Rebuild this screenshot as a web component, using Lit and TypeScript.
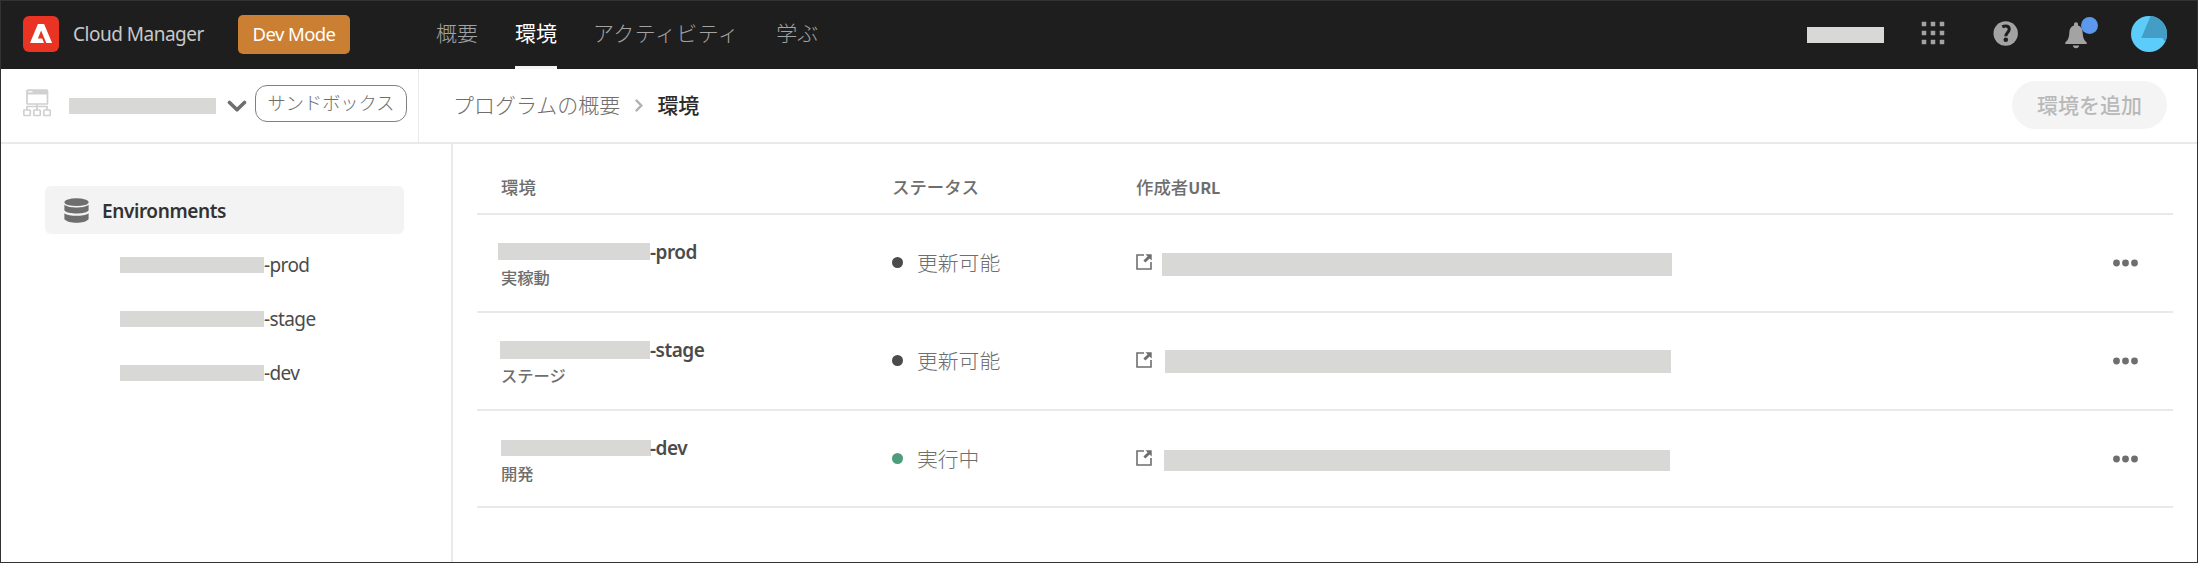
import { LitElement, html, css } from "lit";
import { customElement } from "lit/decorators.js";
import { classMap } from "lit/directives/class-map.js";

const rows = [
  { cls: "r1", suffix: "-prod", type: "実稼動", status: "更新可能", running: false },
  { cls: "r2", suffix: "-stage", type: "ステージ", status: "更新可能", running: false },
  { cls: "r3", suffix: "-dev", type: "開発", status: "実行中", running: true },
];

const logo = html`<svg class="logo" viewBox="0 0 36 36" width="36" height="36"><rect width="36" height="36" rx="6" fill="#e93323"/><path fill="#fff" d="M14.900 8h6.200l8 19h-5.800l-5.200-12.600-3.200 8.200h4.300l1.800 4.400H7z"/></svg>`;
const chevron = html`<svg class="chev" viewBox="0 0 20 13" width="20" height="13"><path d="M2.500 2.500 10 9.800 17.500 2.500" fill="none" stroke="#6e6e6e" stroke-width="3.600" stroke-linecap="round" stroke-linejoin="round"/></svg>`;
const program = html`<svg class="program" viewBox="0 0 28 28" width="28" height="28"><g fill="none" stroke="#d0d0d0" stroke-width="1.700"><rect x="4" y="1" width="20.500" height="14" rx="1"/><path d="M14 15v6M4 21v-3.500h20V21"/><rect x=".8" y="21" width="6.500" height="5.500" rx=".8"/><rect x="10.800" y="21" width="6.500" height="5.500" rx=".8"/><rect x="20.800" y="21" width="6.500" height="5.500" rx=".8"/></g><path d="M4 1h20.500v4.500H4z" fill="#d0d0d0"/><path d="M5 2.800h4.500" stroke="#fff" stroke-width="1.200"/></svg>`;
const grid = html`<svg class="grid" viewBox="0 0 24 24" width="24" height="24" fill="#a3a3a3">${[0.5, 9.500, 18.500].map((y) => [0.5, 9.500, 18.500].map((x) => html`<svg x=${x} y=${y} width="5" height="5"><rect width="5" height="5" rx=".8"/></svg>`))}</svg>`;
const help = html`<svg class="help" viewBox="0 0 26 26" width="26" height="26"><circle cx="12.700" cy="12.500" r="12.200" fill="#a3a3a3"/><path d="M9.300 5.900C13 4 16.600 5.200 16.200 8.700c-.3 2.600-3.300 3.300-3.400 6.600" fill="none" stroke="#1e1e1e" stroke-width="3"/><circle cx="12.800" cy="18.800" r="2.300" fill="#1e1e1e"/></svg>`;
const bell = html`<svg viewBox="0 0 22 27" width="22" height="27" fill="#a3a3a3"><path d="M11 .3c1.200 0 2 .8 2 2v1.200c3.500 1 4.500 4 4.700 7.500.3 5 1.300 7 4 9.500v1.500H.3v-1.500c2.700-2.500 3.700-4.500 4-9.500.2-3.500 1.200-6.500 4.700-7.500V2.300c0-1.200.8-2 2-2zM7.800 23.500h6.400c-.4 1.700-1.500 2.700-3.200 2.700s-2.800-1-3.200-2.700z"/></svg>`;
const avatar = html`<svg class="avatar" viewBox="0 0 36 36" width="36" height="36"><circle cx="18" cy="18" r="18" fill="#5ccdfb"/><path d="M19.500.1A18 18 0 0 1 34.200 26L31.500 22H10.300z" fill="#449dc5"/></svg>`;
const crumb = html`<svg class="sep" viewBox="0 0 8 13" width="8" height="13"><path d="M1.500 1.500 6.300 6.500 1.500 11.500" fill="none" stroke="#b0b0b0" stroke-width="2.400" stroke-linecap="round"/></svg>`;
const database = html`<svg viewBox="0 0 25 25" width="25" height="25" fill="#6e6e6e"><ellipse cx="12.500" cy="4.200" rx="12.100" ry="3.900"/><path d="M.4 6.800C3 9 8 9.500 12.500 9.500S22 9 24.600 6.800v5.700C22.500 14.700 17.500 15.500 12.500 15.500S2.500 14.700.4 12.500zM.4 15.200c2.600 2.200 7.600 2.500 12.100 2.500s9.500-.3 12.100-2.500v6C22.500 23.700 17.500 24.700 12.500 24.700S2.500 23.700.4 21.200z"/></svg>`;
const external = html`<svg class="ext" viewBox="0 0 16 16" width="16" height="16"><path d="M8 1H1v14h14V8" fill="none" stroke="#6e6e6e" stroke-width="1.600"/><path d="M9.500.3h6.200v6.200l-2.100-2.100-4.200 4.200-2-2 4.200-4.200z" fill="#6e6e6e"/></svg>`;
const more = html`<svg class="more" viewBox="0 0 26 8" width="26" height="8" fill="#6e6e6e"><circle cx="3.500" cy="4" r="3.400"/><circle cx="12.500" cy="4" r="3.400"/><circle cx="21.500" cy="4" r="3.400"/></svg>`;

@customElement("app-root")
export class AppRoot extends LitElement {
  static styles = css`
    :host { display: block; }
    * { box-sizing: border-box; }
    svg { display: block; flex: none; }
    .page { height: 563px; border: 1px solid #323232; background: #fff; display: flex; flex-direction: column; overflow: hidden; font-family: "Noto Sans", "Noto Sans CJK JP", sans-serif; font-size: 19px; color: #6e6e6e; white-space: nowrap; }
    .jp { font-family: "Noto Sans CJK JP", sans-serif; }
    .redact { background: #d8d8d6; flex: none; }
    header { height: 68px; flex: none; background: #1e1e1e; display: flex; align-items: center; padding: 0 30px 3px 22px; }
    .brand { margin-left: 14px; width: 130px; color: #c8c8c8; font-size: 19px; letter-spacing: -.5px; }
    .mode { margin-left: 35px; width: 112px; height: 39px; border-radius: 5px; background: #cb7f33; color: #fff; display: flex; align-items: center; justify-content: center; font-size: 18.500px; letter-spacing: -.6px; margin-top: 1px; padding-bottom: 2px; }
    nav { display: flex; align-self: stretch; margin: 0 0 -3px 86px; gap: 37px; font-size: 21px; font-weight: 300; color: #a3a3a3; }
    nav span { display: flex; align-items: center; padding-bottom: 5px; border-bottom: 3px solid transparent; padding-top: 2px; }
    nav .on { color: #fff; border-color: #f4f4f4; font-weight: 400; }
    nav .wide { letter-spacing: .4px; margin-left: -1px; }
    .user { width: 77px; height: 16px; margin-left: auto; margin-top: 2px; }
    .grid { margin-left: 37px; margin-top: -1px; }
    .help { margin-left: 48px; margin-top: 1px; }
    .bell { position: relative; margin: 3px 0 0 46px; }
    .badge { position: absolute; left: 16px; top: -5px; width: 17px; height: 17px; border-radius: 50%; background: #5c98ee; }
    .avatar { margin-left: 44px; }
    .sub { height: 75px; flex: none; border-bottom: 2px solid #e9e9e9; display: flex; }
    .picker { width: 418px; border-right: 1px solid #e9e9e9; display: flex; align-items: center; padding: 0 11px 3px 22px; }
    .program { margin-top: -3px; }
    .prog-name { width: 147px; height: 16px; margin: 3px 11px 0 18px; }
    .chev { margin-top: 4px; }
    .pill { margin-left: 8px; width: 152px; height: 37px; border: 1px solid #808080; border-radius: 12px; font-size: 18.200px; font-weight: 300; display: flex; align-items: center; justify-content: center; padding-bottom: 3px; margin-top: -1px; }
    .crumbs { display: flex; align-items: center; padding: 0 0 4px 34px; font-size: 21px; font-weight: 300; }
    .sep { margin: 4px 14px 0 15px; }
    .crumbs .here { font-weight: 500; color: #2c2c2c; }
    .add { margin: 12px 30px 0 auto; width: 155px; height: 48px; border-radius: 24px; background: #f4f4f4; color: #b9b9b9; font-size: 21px; font-weight: 500; display: flex; align-items: center; justify-content: center; padding-bottom: 3px; }
    .body { flex: 1; display: flex; }
    aside { width: 452px; border-right: 2px solid #e9e9e9; padding: 42px 0 0 44px; }
    .group { width: 359px; height: 48px; border-radius: 6px; background: #f3f3f3; color: #323232; display: flex; align-items: center; gap: 13px; padding-left: 19px; font-weight: 600; letter-spacing: -.4px; margin-bottom: 4px; }
    .group span { padding-top: 1px; }
    .child { height: 54px; display: flex; align-items: center; padding-left: 75px; color: #4b4b4b; letter-spacing: -.6px; }
    .child .redact { width: 144px; height: 16px; }
    main { flex: 1; padding: 0 24px 0 24px; }
    .row { height: 98px; border-bottom: 2px solid #e9e9e9; display: grid; grid-template-columns: 415px 244px 1fr 60px; }
    .row.r3 { height: 97px; }
    .row.head { height: 71px; font-size: 17.400px; font-weight: 500; align-items: center; padding-top: 16px; padding-bottom: 0; }
    .row.head > * { line-height: 24px; }
    .row.head .c1 { padding-left: 24px; }
    .head .url { font-size: 16px; font-weight: 600; }
    .env { padding: 25px 0 0 21px; }
    .name { display: flex; align-items: center; height: 24px; font-weight: 600; color: #4b4b4b; letter-spacing: -.5px; }
    .name .redact { width: 152px; height: 17px; margin-top: -1px; }
    .r2 .name .redact { width: 150px; height: 18px; margin-left: 2px; }
    .r3 .name .redact { width: 150px; height: 16px; margin-left: 3px; margin-right: -1px; }
    .type { padding-left: 3px; font-size: 16.300px; line-height: 24px; font-weight: 500; margin-top: 1px; }
    .status { display: flex; align-items: center; gap: 14px; font-size: 20.800px; font-weight: 300; height: 96px; padding-bottom: 1px; }
    .status span { padding-bottom: 2px; }
    .dot { width: 11px; height: 11px; border-radius: 50%; background: #4b4b4b; }
    .dot.running { background: #4f9c7b; }
    .link { display: flex; align-items: flex-start; padding-top: 36px; }
    .ext { margin-top: 3px; }
    .link .redact { width: 510px; height: 23px; margin: 2px 0 0 10px; }
    .r2 .link .redact { width: 506px; margin: 1px 0 0 13px; }
    .r3 .link .redact { width: 506px; height: 21px; margin: 3px 0 0 12px; }
    .more { margin-top: 43.500px; }
  `;

  render() {
    return html`<div class="page">
      <header>
        ${logo}<span class="brand">Cloud Manager</span><span class="mode">Dev Mode</span>
        <nav class="jp"><span>概要</span><span class="on">環境</span><span class="wide">アクティビティ</span><span>学ぶ</span></nav>
        <div class="redact user"></div>${grid}${help}
        <div class="bell">${bell}<div class="badge"></div></div>${avatar}
      </header>
      <div class="sub">
        <div class="picker">${program}<div class="redact prog-name"></div>${chevron}<span class="pill jp">サンドボックス</span></div>
        <div class="crumbs jp"><span>プログラムの概要</span>${crumb}<span class="here">環境</span></div>
        <div class="add jp">環境を追加</div>
      </div>
      <div class="body">
        <aside>
          <div class="group">${database}<span>Environments</span></div>
          ${rows.map((r) => html`<div class="child"><div class="redact"></div><span>${r.suffix}</span></div>`)}
        </aside>
        <main>
          <div class="row head jp"><span class="c1">環境</span><span>ステータス</span><span>作成者<span class="url">URL</span></span><span></span></div>
          ${rows.map((r) => html`<div class="row ${r.cls}">
            <div class="env"><div class="name"><div class="redact"></div><span>${r.suffix}</span></div><div class="type jp">${r.type}</div></div>
            <div class="status jp"><div class=${classMap({ dot: true, running: r.running })}></div><span>${r.status}</span></div>
            <div class="link">${external}<div class="redact"></div></div>
            ${more}
          </div>`)}
        </main>
      </div>
    </div>`;
  }
}
